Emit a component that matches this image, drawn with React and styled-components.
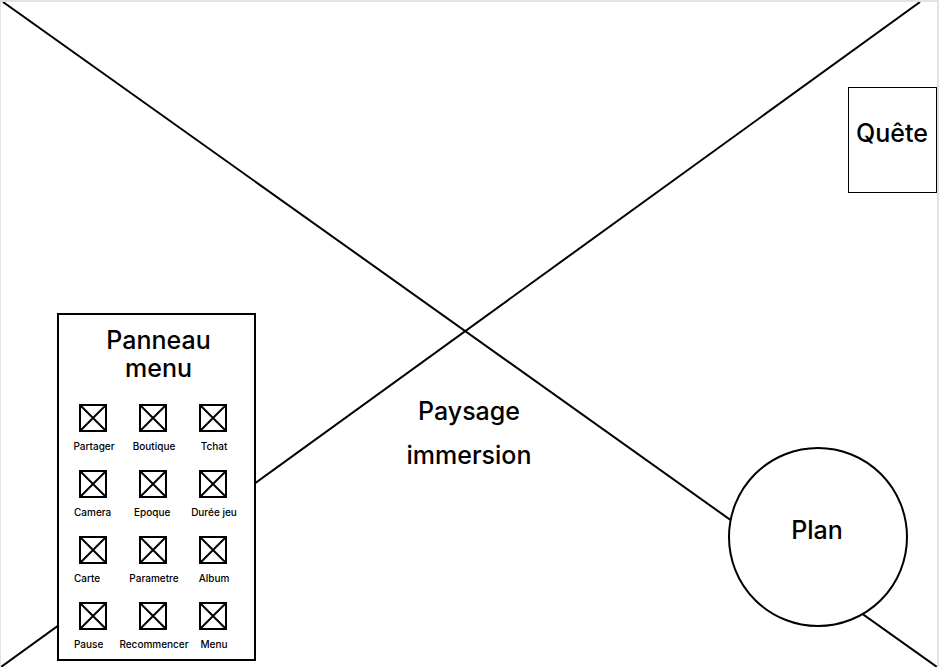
import React from "react";
import styled, { createGlobalStyle } from "styled-components";

const GlobalStyle = createGlobalStyle`
  *, *::before, *::after { box-sizing: border-box; }
  body {
    margin: 0;
    background: #fff;
    color: #000;
    font-family: Inter, "Liberation Sans", sans-serif;
    font-weight: 500;
  }
`;

const Scene = styled.main`
  position: relative;
  isolation: isolate;
  display: grid;
  grid-template-columns: 1fr auto 1fr;
  min-height: 100vh;
  border: solid #e2e2e2;
  border-width: 2px 2px 0 1px;
`;

const Backdrop = styled.svg`
  position: absolute;
  inset: 0;
  z-index: -1;
  width: 100%;
  height: 100%;
  stroke: #000;
  stroke-width: 2;

  line { vector-effect: non-scaling-stroke; }
`;

const MenuPanel = styled.nav`
  justify-self: start;
  align-self: end;
  margin: 0 0 6px 56px;
  padding: 11px 0 6px;
  border: 2px solid #000;
  background: #fff;
`;

const PanelTitle = styled.h2`
  margin: 0 0 22px;
  padding-left: 4px;
  font-size: 25px;
  font-weight: 500;
  line-height: 28px;
  text-align: center;
`;

const MenuGrid = styled.ul`
  display: grid;
  grid-template-columns: repeat(3, 60px);
  row-gap: 15px;
  margin: 0;
  padding: 0 11px 0 4px;
  list-style: none;
`;

const MenuButton = styled.button`
  display: flex;
  flex-direction: column;
  align-items: center;
  gap: 5px;
  width: 100%;
  padding: 0;
  border: 0;
  background: none;
  color: inherit;
  font: inherit;
  cursor: pointer;
`;

const ButtonLabel = styled.span`
  min-width: 42px;
  padding-left: 2px;
  font-size: 10px;
  line-height: 18px;
  text-align: ${({ $align }) => $align};
  white-space: nowrap;
`;

const Caption = styled.h1`
  align-self: end;
  margin: 0 0 190px;
  font-size: 25px;
  font-weight: 500;
  line-height: 44px;
  text-align: center;
`;

const SideColumn = styled.div`
  display: flex;
  flex-direction: column;
  justify-content: space-between;
  align-items: flex-end;
`;

const QuestButton = styled.button`
  margin-top: 85px;
  padding: 29px 8px 43px 7px;
  border: 1px solid #000;
  background: #fff;
  color: inherit;
  font-family: inherit;
  font-size: 25px;
  font-weight: 500;
  line-height: 32px;
  cursor: pointer;
`;

const MapButton = styled.button`
  width: 180px;
  aspect-ratio: 1;
  margin: 0 29px 40px 0;
  padding: 0 2px 14px 0;
  border: 2px solid #000;
  border-radius: 50%;
  background: #fff;
  color: inherit;
  font-family: inherit;
  font-size: 25px;
  font-weight: 500;
  line-height: 32px;
  cursor: pointer;
`;

const menuItems = [
  ["Partager", "left"],
  ["Boutique", "left"],
  ["Tchat", "center"],
  ["Camera", "left"],
  ["Epoque", "left"],
  ["Durée jeu", "center"],
  ["Carte", "left"],
  ["Parametre", "left"],
  ["Album", "center"],
  ["Pause", "left"],
  ["Recommencer", "left"],
  ["Menu", "center"],
];

function CrossedBox() {
  return (
    <svg width="28" height="28" viewBox="0 0 28 28" fill="none" stroke="#000" strokeWidth="2" aria-hidden="true">
      <path d="M1 1h26v26H1zM1 1l26 26M27 1L1 27" />
    </svg>
  );
}

export default function App() {
  return (
    <>
      <GlobalStyle />
      <Scene>
        <Backdrop viewBox="0 0 936 665" preserveAspectRatio="none" aria-hidden="true">
          <line x1="2" y1="0" x2="936" y2="665" />
          <line x1="919" y1="0" x2="0" y2="665" />
        </Backdrop>
        <MenuPanel aria-labelledby="menu-title">
          <PanelTitle id="menu-title">
            Panneau
            <br />
            menu
          </PanelTitle>
          <MenuGrid>
            {menuItems.map(([label, align]) => (
              <li key={label}>
                <MenuButton type="button">
                  <CrossedBox />
                  <ButtonLabel $align={align}>{label}</ButtonLabel>
                </MenuButton>
              </li>
            ))}
          </MenuGrid>
        </MenuPanel>
        <Caption>
          Paysage
          <br />
          immersion
        </Caption>
        <SideColumn>
          <QuestButton type="button">Quête</QuestButton>
          <MapButton type="button">Plan</MapButton>
        </SideColumn>
      </Scene>
    </>
  );
}
